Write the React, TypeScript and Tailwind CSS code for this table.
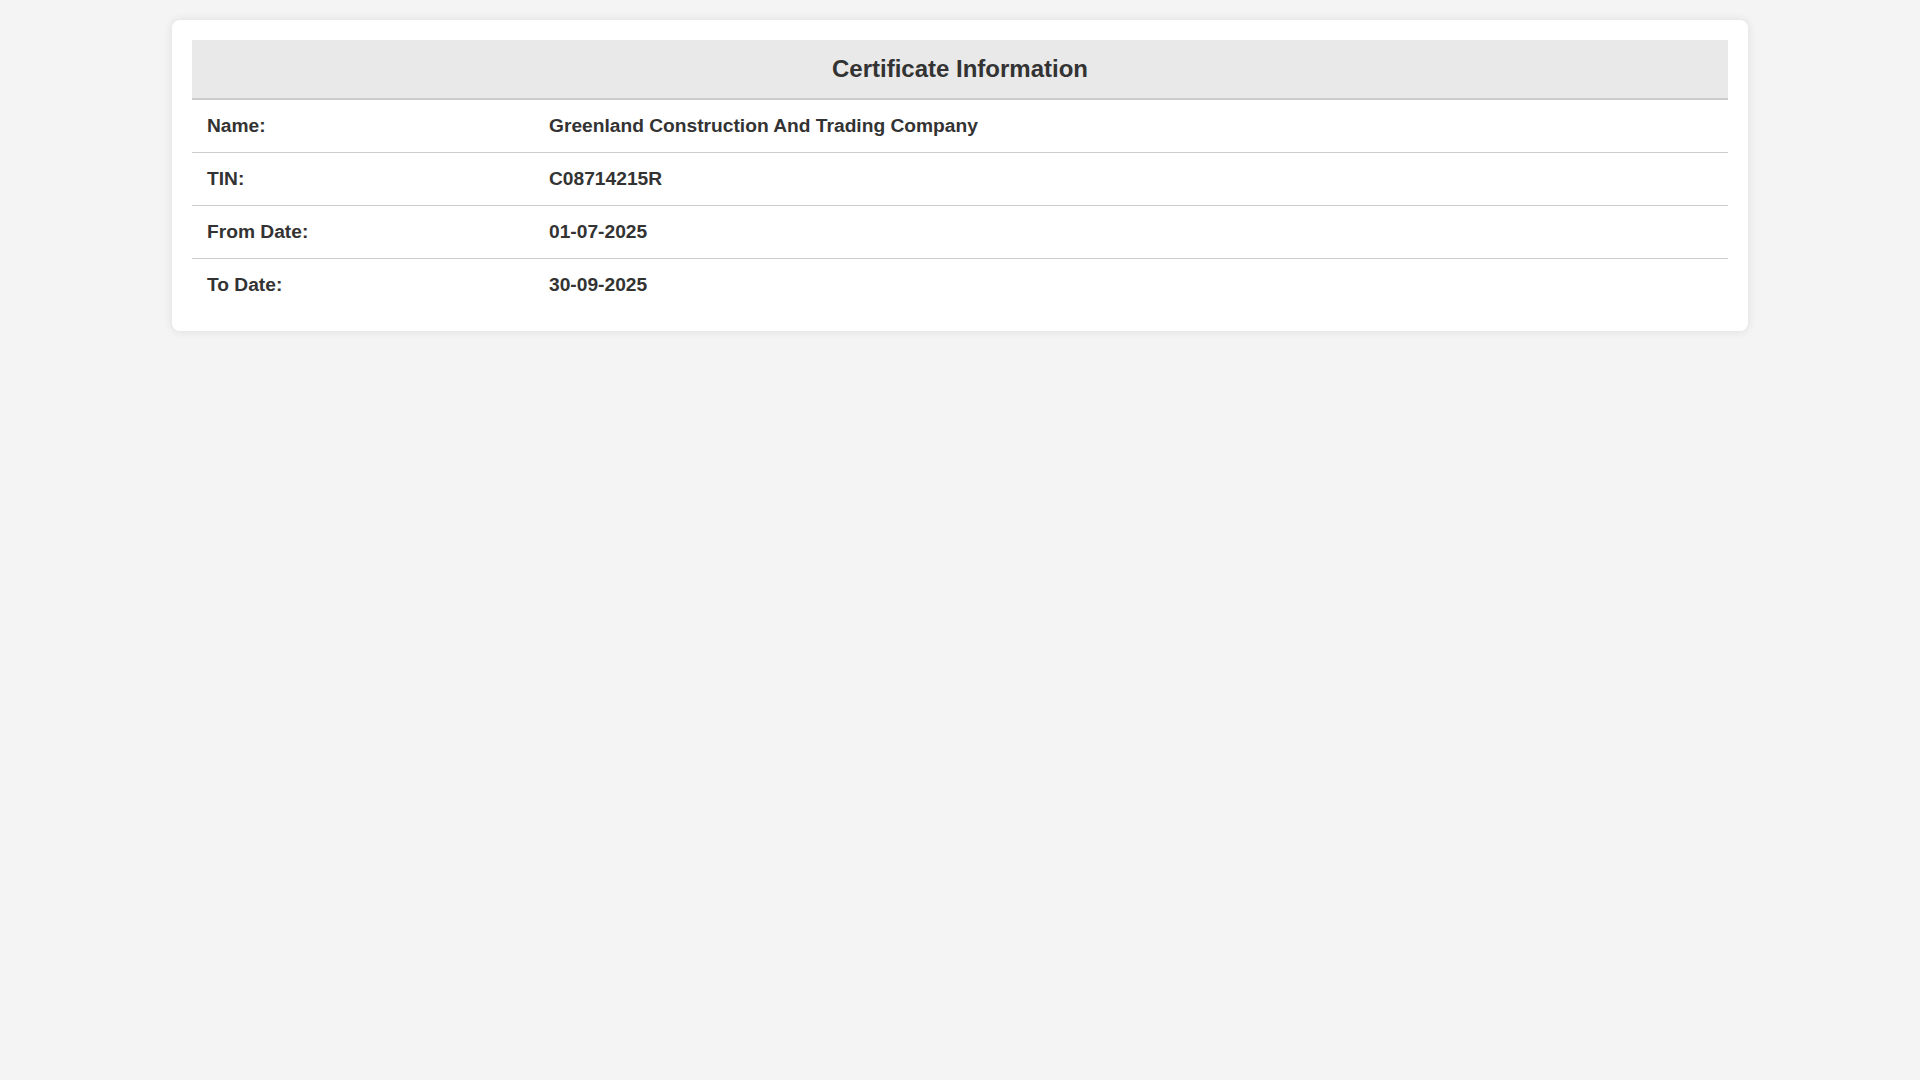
export default function App() {
  const rows = [
    ["Name:", "Greenland Construction And Trading Company"],
    ["TIN:", "C08714215R"],
    ["From Date:", "01-07-2025"],
    ["To Date:", "30-09-2025"],
  ];
  return (
    <div className="min-h-screen w-full bg-[#f4f4f4] pt-[20px] text-[#333]" style={{ fontFamily: '"Liberation Sans", Arial, sans-serif' }}>
      <div className="mx-auto w-[1576px] rounded-[8px] bg-white p-[20px] shadow-[0_0_10px_rgba(0,0,0,0.1)]">
        <div className="flex h-[60px] items-center justify-center border-b-2 border-[#cccccc] bg-[#e9e9e9]">
          <h2 className="text-[24px] font-bold leading-none">Certificate Information</h2>
        </div>
        {rows.map(([k, v], i) => (
          <div
            key={k}
            className={`flex items-center text-[19.2px] font-bold ${i < rows.length - 1 ? "h-[53px] border-b border-[#cccccc]" : "h-[52px]"}`}
          >
            <div className="w-[342px] pl-[15px]">{k}</div>
            <div className="pl-[15px]">{v}</div>
          </div>
        ))}
      </div>
    </div>
  );
}
